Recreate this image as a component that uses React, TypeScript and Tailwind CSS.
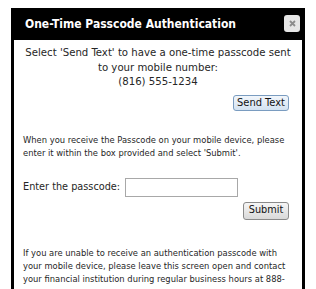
export default function App() {
  return (
    <div className="w-[316px] h-[289px] overflow-hidden bg-white pt-[8px] pl-[11px] font-['DejaVu_Sans_Condensed','DejaVu_Sans',sans-serif]">
      <div className="w-[294px] bg-black px-[3px] pb-[3px]">
        {/* Title bar */}
        <div className="relative h-[32px] flex items-center pl-[11px]">
          <span className="text-white font-bold text-[12px]">One-Time Passcode Authentication</span>
          <button className="absolute right-[2px] top-[7px] w-[16px] h-[17px] rounded-[3px] bg-[#e6e6e6] flex items-center justify-center">
            <svg width="7" height="7" viewBox="0 0 7 7">
              <path d="M1 1L6 6M6 1L1 6" stroke="#8c8c8c" strokeWidth="1.8" />
            </svg>
          </button>
        </div>

        {/* Body */}
        <div className="bg-white px-[9px] pt-[6px] pb-4 text-[#262626]">
          <p className="text-center text-[11.3px] leading-[14.5px] whitespace-nowrap">
            Select 'Send Text' to have a one-time passcode sent
            <br />
            to your mobile number:
            <br />
            (816) 555-1234
          </p>
          <div className="flex justify-end mt-[5px] pr-[4px]">
            <button className="h-[16px] w-[56px] rounded-[3px] border border-[#7a9cc0] bg-gradient-to-b from-[#f2f6fb] to-[#d3e2f1] text-[11px] leading-none text-[#111]">
              Send Text
            </button>
          </div>

          <p className="mt-[22px] text-[9.3px] leading-[13px] whitespace-nowrap">
            When you receive the Passcode on your mobile device, please
            <br />
            enter it within the box provided and select 'Submit'.
          </p>

          <div className="flex items-center mt-[19px]">
            <span className="text-[10.8px] w-[102px]">Enter the passcode:</span>
            <input className="w-[113px] h-[19px] border border-[#a8a8a8] bg-white" />
          </div>
          <div className="flex justify-end mt-[5px] pr-[4px]">
            <button className="h-[18px] w-[46px] rounded-[3px] border border-[#8a8a8a] bg-gradient-to-b from-[#f6f6f6] to-[#d9d9d9] text-[10.8px] leading-none text-[#111]">
              Submit
            </button>
          </div>

          <p className="mt-[26px] text-[9.3px] leading-[13px] whitespace-nowrap">
            If you are unable to receive an authentication passcode with
            <br />
            your mobile device, please leave this screen open and contact
            <br />
            your financial institution during regular business hours at 888-
          </p>
        </div>
      </div>
    </div>
  );
}
